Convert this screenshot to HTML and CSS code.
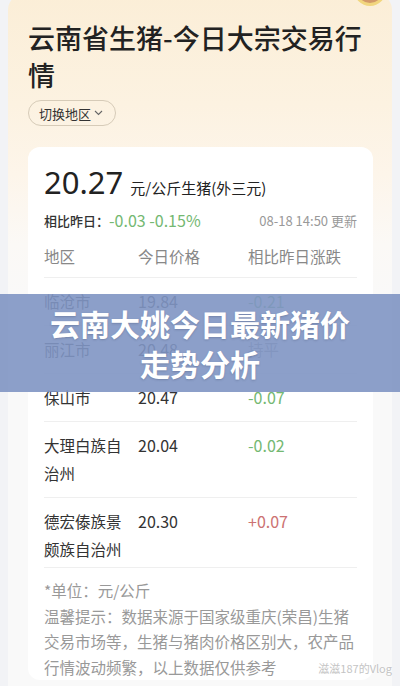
FILE: index.html
```html
<!DOCTYPE html>
<html lang="zh-CN">
<head>
<meta charset="UTF-8">
<meta name="viewport" content="width=device-width, initial-scale=1.0">
<title>云南省生猪-今日大宗交易行情</title>
<link rel="stylesheet" href="styles.css">
</head>
<body>
<div class="page">
  <div class="outer">
    <div class="avatar"></div>
    <h1 class="title">云南省生猪-今日大宗交易行情</h1>
    <button class="switch">切换地区
      <svg width="9" height="6" viewBox="0 0 9 6"><path d="M1 1l3.5 3.5L8 1" fill="none" stroke="#666" stroke-width="1.1"/></svg>
    </button>

    <div class="card">
      <div class="price">
        <span class="price-num">20.27</span>
        <span class="price-unit">元/公斤生猪(外三元)</span>
      </div>
      <div class="compare">
        <span class="compare-label">相比昨日：</span>
        <span class="compare-val down">-0.03 -0.15%</span>
        <span class="update">08-18 14:50 更新</span>
      </div>

      <!-- price table -->
      <div class="table">
        <div class="row head">
          <div class="cell">地区</div>
          <div class="cell">今日价格</div>
          <div class="cell">相比昨日涨跌</div>
        </div>
        <div class="row">
          <div class="cell">临沧市</div>
          <div class="cell num">19.84</div>
          <div class="cell num down">-0.21</div>
        </div>
        <div class="row">
          <div class="cell">丽江市</div>
          <div class="cell num">20.48</div>
          <div class="cell flat">持平</div>
        </div>
        <div class="row">
          <div class="cell">保山市</div>
          <div class="cell num">20.47</div>
          <div class="cell num down">-0.07</div>
        </div>
        <div class="row">
          <div class="cell">大理白族自治州</div>
          <div class="cell num">20.04</div>
          <div class="cell num down">-0.02</div>
        </div>
        <div class="row last">
          <div class="cell">德宏傣族景颇族自治州</div>
          <div class="cell num">20.30</div>
          <div class="cell num up">+0.07</div>
        </div>
      </div>

      <div class="notes">
        <p>*单位：元/公斤</p>
        <p>温馨提示：数据来源于国家级重庆(荣昌)生猪交易市场等，生猪与猪肉价格区别大，农产品行情波动频繁，以上数据仅供参考</p>
      </div>
    </div>
  </div>

  <div class="banner">云南大姚今日最新猪价<br>走势分析</div>
  <div class="mark">滋滋187的Vlog</div>
</div>
</body>
</html>
```

FILE: styles.css
```css
body {
  margin: 0;
  background-color: #f2f3f6;
  font-family: "Noto Sans CJK SC", "Noto Sans", sans-serif;
  color: #333;
}
.page {
  position: relative;
  padding: 0 8px;
  height: 686px;
  overflow: hidden;
}
.outer {
  position: relative;
  margin-top: -6px;
  padding: 26px 19px 0 20px;
  border-radius: 16px 16px 0 0;
  background: linear-gradient(180deg, #fbeed7 0, #fcf2e1 110px, #fdf5ea 180px, #fbf9f6 250px, #f9f9f9 320px, #f9f9f9 100%);
  height: 720px;
}
.avatar {
  position: absolute;
  top: -20px;
  right: 6px;
  width: 26px;
  height: 26px;
  border-radius: 50%;
  border: 3px solid #f1d67e;
  background-color: #d39a6a;
}
.title {
  margin: 0;
  font-size: 27px;
  line-height: 36.5px;
  font-weight: 500;
  color: #222;
}
.switch {
  margin-top: 7px;
  height: 26px;
  padding: 0 12px 0 10px;
  border: 1px solid #d6cbb8;
  border-radius: 13px;
  background: transparent;
  font-family: inherit;
  font-size: 13px;
  color: #333;
  display: flex;
  align-items: center;
  gap: 3px;
}
.card {
  margin-top: 21px;
  background-color: #fff;
  border-radius: 12px;
  padding: 15px 16px 0 16px;
}
.price {
  display: flex;
  align-items: baseline;
  gap: 7px;
}
.price-num {
  font-size: 31px;
  line-height: 40px;
  color: #222;
  font-family: "Noto Sans", sans-serif;
}
.price-unit {
  font-size: 15px;
  color: #222;
}
.compare {
  display: flex;
  align-items: center;
  margin-top: 6px;
  height: 24px;
}
.compare-label {
  font-size: 13px;
  font-weight: 500;
  color: #333;
}
.compare-val {
  font-size: 16px;
}
.update {
  margin-left: auto;
  font-size: 13px;
  color: #999;
}
.down {
  color: #74b872;
}
.up {
  color: #cc7272;
}
.flat {
  color: #999;
}
.table {
  margin-top: 5px;
}
.row {
  display: grid;
  grid-template-columns: 94px 110px 1fr;
  padding: 9px 0 10px;
  border-bottom: 1px solid #efefef;
  font-size: 15.5px;
  line-height: 28px;
  color: #333;
}
.row.last {
  padding-bottom: 4px;
}
.row .cell:first-child {
  padding-right: 8px;
}
.row.head {
  padding: 5px 0 7px;
  color: #888;
}
.num {
  font-size: 16px;
}
.notes {
  padding: 10px 0 0;
  font-size: 15.5px;
  line-height: 25.5px;
  color: #999;
}
.notes p {
  margin: 0;
}
.banner {
  position: absolute;
  left: 0;
  right: 0;
  top: 294px;
  height: 98px;
  display: flex;
  align-items: center;
  justify-content: center;
  text-align: center;
  background-color: rgba(128, 149, 195, 0.9);
  color: #fff;
  font-size: 30px;
  line-height: 40px;
  font-weight: 700;
  text-shadow: 0 1px 2px rgba(60, 70, 100, 0.3);
}
.mark {
  position: absolute;
  right: 8px;
  bottom: 10px;
  font-size: 11px;
  color: #c4c4c4;
  text-shadow: 0 0 2px #fff, 0 0 2px #fff;
}
```
